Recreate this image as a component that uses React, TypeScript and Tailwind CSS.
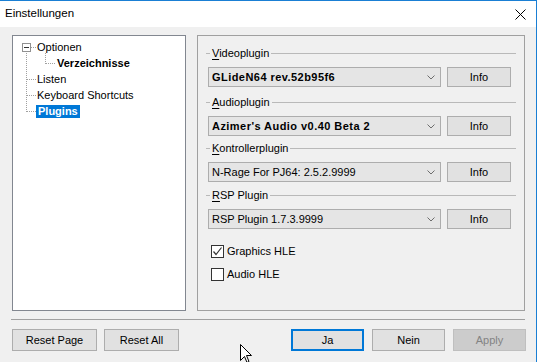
import React from "react";

function Chevron() {
  return (
    <svg width="8" height="5" viewBox="0 0 8 5" className="shrink-0">
      <path d="M0.5 0.5 L4 4 L7.5 0.5" fill="none" stroke="#6d6d6d" strokeWidth="1" />
    </svg>
  );
}

function GroupHeader({ mn, rest }: { mn: string; rest: string }) {
  return (
    <div className="flex items-center h-[14px]">
      <div className="w-[4px] h-px bg-[#b9b9b9]" />
      <span className="px-[2px] leading-[14px]">
        <span className="underline underline-offset-[2px]">{mn}</span>
        {rest}
      </span>
      <div className="flex-1 h-px bg-[#b9b9b9]" />
    </div>
  );
}

function PluginRow({ value, bold }: { value: string; bold?: boolean }) {
  return (
    <div className="flex ml-[2px] mt-[7px] gap-[6px]">
      <div className="w-[233px] h-[20px] bg-[#e5e5e5] border border-[#adadad] flex items-center justify-between pl-[3px] pr-[5px]">
        <span className={bold ? "font-bold tracking-[0.45px]" : ""}>{value}</span>
        <Chevron />
      </div>
      <div className="w-[64px] h-[20px] bg-[#e1e1e1] border border-[#adadad] flex items-center justify-center">
        Info
      </div>
    </div>
  );
}

function Btn({ label, className }: { label: string; className: string }) {
  return (
    <div className={"h-[22px] flex items-center justify-center " + className}>{label}</div>
  );
}

export default function App() {
  return (
    <div className="relative w-[537px] h-[362px] bg-[#f0f0f0] border-t border-r border-[#1a7fd4] overflow-hidden font-['Liberation_Sans',Arial,sans-serif] text-[11px] text-black">
      {/* title bar */}
      <div className="h-[26px] bg-white flex items-center justify-between pl-[5px] pr-[10px]">
        <span className="text-[11.5px]">Einstellungen</span>
        <svg width="11" height="11" viewBox="0 0 11 11">
          <path d="M0.5 0.5 L10.5 10.5 M10.5 0.5 L0.5 10.5" stroke="#000" strokeWidth="1" />
        </svg>
      </div>

      {/* panels */}
      <div className="flex pl-[12px] pt-[8px] gap-[11px]">
        {/* tree */}
        <div className="relative w-[174px] h-[276px] border border-[#828790] bg-white">
          <svg
            className="absolute left-0 top-0"
            width="60"
            height="90"
            viewBox="0 0 60 90"
            shapeRendering="crispEdges"
          >
            <g stroke="#a0a0a0" strokeWidth="1" strokeDasharray="1 1">
              <line x1="13.5" y1="17" x2="13.5" y2="76" />
              <line x1="18" y1="11.5" x2="23" y2="11.5" />
              <line x1="14" y1="43.5" x2="23" y2="43.5" />
              <line x1="14" y1="59.5" x2="23" y2="59.5" />
              <line x1="14" y1="75.5" x2="23" y2="75.5" />
              <line x1="32.5" y1="17" x2="32.5" y2="28" />
              <line x1="33" y1="27.5" x2="43" y2="27.5" />
            </g>
            <rect x="9.5" y="7.5" width="8" height="8" fill="#fff" stroke="#919191" />
            <line x1="11" y1="11.5" x2="16" y2="11.5" stroke="#333" />
          </svg>
          <div className="relative pt-[3px]">
            <div className="h-[16px] leading-[16px] pl-[24px]">Optionen</div>
            <div className="h-[16px] leading-[16px] pl-[44px] font-bold">Verzeichnisse</div>
            <div className="h-[16px] leading-[16px] pl-[24px]">Listen</div>
            <div className="h-[16px] leading-[16px] pl-[24px]">Keyboard Shortcuts</div>
            <div className="h-[16px] pl-[23px] flex items-center">
              <span className="bg-[#0078d7] text-white font-bold px-[2px] h-[13px] leading-[13px]">
                Plugins
              </span>
            </div>
          </div>
        </div>

        {/* right panel */}
        <div className="w-[328px] h-[276px] border border-[#a0a0a0] px-[8px] pt-[10px] flex flex-col">
          <GroupHeader mn="V" rest="ideoplugin" />
          <PluginRow value="GLideN64 rev.52b95f6" bold />
          <div className="mt-[8px]">
            <GroupHeader mn="A" rest="udioplugin" />
          </div>
          <PluginRow value="Azimer's Audio v0.40 Beta 2" bold />
          <div className="mt-[5px]">
            <GroupHeader mn="K" rest="ontrollerplugin" />
          </div>
          <PluginRow value="N-Rage For PJ64: 2.5.2.9999" />
          <div className="mt-[6px]">
            <GroupHeader mn="R" rest="SP Plugin" />
          </div>
          <PluginRow value="RSP Plugin 1.7.3.9999" />

          <div className="flex items-center ml-[5px] mt-[16px] h-[13px] gap-[3px]">
            <div className="w-[13px] h-[13px] border border-[#333] bg-white flex items-center justify-center">
              <svg width="11" height="11" viewBox="0 0 11 11">
                <path d="M1.5 5.5 L4 8.5 L9.5 1.5" fill="none" stroke="#333" strokeWidth="1.2" />
              </svg>
            </div>
            <span>Graphics HLE</span>
          </div>
          <div className="flex items-center ml-[5px] mt-[10px] h-[13px] gap-[3px]">
            <div className="w-[13px] h-[13px] border border-[#333] bg-white" />
            <span>Audio HLE</span>
          </div>
        </div>
      </div>

      {/* separator */}
      <div className="ml-[11px] w-[514px] mt-[8px] h-px bg-[#a0a0a0]" />

      {/* buttons */}
      <div className="flex justify-between pl-[12px] pr-[10px] mt-[9px]">
        <div className="flex gap-[7px]">
          <Btn label="Reset Page" className="w-[85px] bg-[#e1e1e1] border border-[#adadad]" />
          <Btn label="Reset All" className="w-[75px] bg-[#e1e1e1] border border-[#adadad]" />
        </div>
        <div className="flex gap-[8px]">
          <Btn label="Ja" className="w-[73px] bg-[#e1e1e1] border-2 border-[#0078d7]" />
          <Btn label="Nein" className="w-[73px] bg-[#e1e1e1] border border-[#adadad]" />
          <Btn label="Apply" className="w-[73px] bg-[#cccccc] border border-[#bfbfbf] text-[#838383]" />
        </div>
      </div>

      {/* mouse cursor */}
      <svg
        className="absolute left-[240px] top-[343px]"
        width="13"
        height="20"
        viewBox="0 0 13 20"
      >
        <path
          d="M0.5 0.5 L0.5 16.5 L4.5 12.5 L7 18.5 L9 17.5 L6.5 11.5 L11.5 11.5 Z"
          fill="#fff"
          stroke="#000"
          strokeWidth="1"
        />
      </svg>
    </div>
  );
}
